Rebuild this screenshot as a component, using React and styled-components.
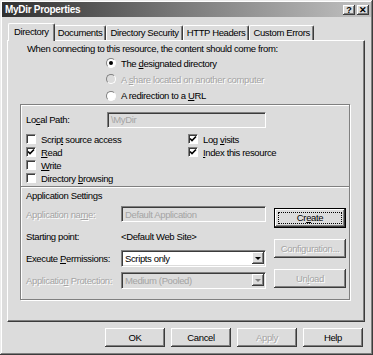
import React from 'react'
import styled, { createGlobalStyle } from 'styled-components'

const FACE = '#dcdcdc'
const SHADOW = '#808080'
const DARK = '#3c3c3c'
const HILITE = '#ffffff'
const GREY_TEXT = '#a4a4a4'
const TRACK = '-0.37px'

const GlobalStyle = createGlobalStyle`
  html, body {
    margin: 0;
    padding: 0;
    background: ${FACE};
  }
  body {
    font-family: "Liberation Sans", Arial, sans-serif;
    font-size: 9.5px;
    letter-spacing: ${TRACK};
    color: #000;
  }
`

const Window = styled.div`
  width: 373px;
  height: 355px;
  box-sizing: border-box;
  background: ${FACE};
  padding: 2px;
  box-shadow: inset -1px -1px ${DARK}, inset 1px 1px #ececec,
    inset -2px -2px ${SHADOW}, inset 2px 2px ${HILITE};
  display: flex;
  flex-direction: column;
`

const TitleBar = styled.div`
  height: 15px;
  background: linear-gradient(90deg, #303030 0%, #7c7c7c 50%, #c2c2c2 100%);
  display: flex;
  align-items: center;
  padding: 0 2px 0 3px;
`

const Title = styled.div`
  flex: 1;
  color: #fff;
  font-weight: bold;
  font-size: 10px;
  letter-spacing: -0.3px;
`

const CaptionButton = styled.div`
  width: 12px;
  height: 10px;
  margin-left: ${p => p.$gap || 0}px;
  background: ${FACE};
  box-shadow: inset -1px -1px ${DARK}, inset 1px 1px ${HILITE}, inset -2px -2px ${SHADOW};
  display: flex;
  align-items: center;
  justify-content: center;
  font-weight: bold;
  font-size: 9px;
  letter-spacing: 0;
  line-height: 10px;
`

const Body = styled.div`
  flex: 1;
  display: flex;
  flex-direction: column;
  padding: 6px 6px 0 5px;
`

const TabStrip = styled.div`
  display: flex;
  align-items: flex-end;
  height: 17px;
  padding-left: 3px;
  position: relative;
  z-index: 1;
`

const Tab = styled.div`
  height: 15px;
  box-sizing: border-box;
  padding: ${p => (p.$active ? '2px 5px 0' : '1px 3px 0')};
  margin: ${p => (p.$active ? '0 -1px -1px -2px' : '0')};
  ${p => p.$active && `height: 18px; z-index: 2;`}
  background: ${FACE};
  border-top: 1px solid ${HILITE};
  border-left: 1px solid ${HILITE};
  border-right: 1px solid ${DARK};
  border-radius: 2px 2px 0 0;
  box-shadow: inset -1px 0 ${SHADOW};
  white-space: nowrap;
  line-height: 12px;
  position: relative;
`

const Panel = styled.div`
  height: 282px;
  box-sizing: border-box;
  border-top: 1px solid ${HILITE};
  border-left: 1px solid ${HILITE};
  border-right: 1px solid ${DARK};
  border-bottom: 1px solid ${DARK};
  box-shadow: inset -1px -1px ${SHADOW};
  padding: 2px 14px 0 12px;
  display: flex;
  flex-direction: column;
`

const Intro = styled.div`
  margin-left: 7px;
  line-height: 12px;
`

const RadioList = styled.div`
  margin: 0 0 0 86px;
  display: flex;
  flex-direction: column;
`

const Choice = styled.label`
  display: flex;
  align-items: center;
  height: 16.3px;
  gap: 5px;
  color: ${p => (p.$disabled ? GREY_TEXT : '#000')};
  text-shadow: ${p => (p.$disabled ? `1px 1px ${HILITE}` : 'none')};
`

const RadioDot = styled.span`
  width: 10px;
  height: 10px;
  box-sizing: border-box;
  border-radius: 50%;
  border: 1px solid;
  border-color: ${SHADOW} ${HILITE} ${HILITE} ${SHADOW};
  background: ${p => (p.$disabled ? FACE : '#fff')};
  display: flex;
  align-items: center;
  justify-content: center;
  &::after {
    content: '';
    width: 4px;
    height: 4px;
    border-radius: 50%;
    background: #000;
    display: ${p => (p.$on ? 'block' : 'none')};
  }
`

const Group = styled.div`
  margin-top: 0;
  height: 196px;
  box-sizing: border-box;
  border: 1px solid ${SHADOW};
  box-shadow: inset 1px 1px ${HILITE}, 1px 1px ${HILITE};
  padding: 7px 5px 0 5px;
  display: flex;
  flex-direction: column;
`

const FieldRow = styled.div`
  display: flex;
  align-items: center;
`

const FieldLabel = styled.div`
  width: ${p => p.$w}px;
  flex-shrink: 0;
  white-space: nowrap;
  color: ${p => (p.$disabled ? GREY_TEXT : '#000')};
  text-shadow: ${p => (p.$disabled ? `1px 1px ${HILITE}` : 'none')};
`

const TextBox = styled.div`
  width: ${p => p.$w}px;
  height: ${p => p.$h || 16}px;
  box-sizing: border-box;
  border: 1px solid;
  border-color: ${SHADOW} ${HILITE} ${HILITE} ${SHADOW};
  box-shadow: inset 1px 1px ${DARK}, inset -1px -1px ${FACE};
  background: ${p => (p.$disabled ? FACE : '#fff')};
  color: ${p => (p.$disabled ? GREY_TEXT : '#000')};
  display: flex;
  align-items: center;
  padding: 0 1px 0 3px;
  white-space: nowrap;
  overflow: hidden;
`

const SelectText = styled.span`
  flex: 1;
`

const DropButton = styled.span`
  width: 12px;
  height: 12px;
  box-sizing: border-box;
  background: ${FACE};
  box-shadow: inset -1px -1px ${DARK}, inset 1px 1px ${HILITE}, inset -2px -2px ${SHADOW};
  display: flex;
  align-items: center;
  justify-content: center;
  &::after {
    content: '';
    border-left: 3px solid transparent;
    border-right: 3px solid transparent;
    border-top: 3px solid ${p => (p.$disabled ? SHADOW : '#000')};
    margin-top: 1px;
  }
`

const CheckGrid = styled.div`
  margin-top: 5px;
  display: grid;
  grid-template-columns: 162px 1fr;
  grid-auto-rows: 13px;
`

const CheckItem = styled.label`
  display: flex;
  align-items: center;
  gap: 5px;
  grid-column: ${p => p.$col};
  grid-row: ${p => p.$row};
`

const Box = styled.span`
  width: 10px;
  height: 10px;
  box-sizing: border-box;
  border: 1px solid;
  border-color: ${SHADOW} ${HILITE} ${HILITE} ${SHADOW};
  box-shadow: inset 1px 1px ${DARK};
  background: #fff;
  display: flex;
  align-items: center;
  justify-content: center;
`

const Separator = styled.div`
  margin: 1px -5px 0;
  border-top: 1px solid ${SHADOW};
  border-bottom: 1px solid ${HILITE};
`

const SectionTitle = styled.div`
  margin-top: 1px;
  line-height: 13px;
`

const AppSettings = styled.div`
  margin-top: 4px;
  display: flex;
`

const AppGrid = styled.div`
  display: grid;
  grid-template-columns: 95px 145px;
  grid-auto-rows: 17px;
  row-gap: 5px;
  align-items: center;
`

const ButtonColumn = styled.div`
  margin: 2px 0 0 8px;
  display: flex;
  flex-direction: column;
  gap: 11px;
`

const Button = styled.div`
  width: ${p => p.$w}px;
  height: ${p => p.$h}px;
  box-sizing: border-box;
  background: ${FACE};
  box-shadow: ${p =>
    p.$default
      ? `inset 0 0 0 1px #000, inset -2px -2px ${DARK}, inset 2px 2px ${HILITE}, inset -3px -3px ${SHADOW}`
      : `inset -1px -1px ${DARK}, inset 1px 1px ${HILITE}, inset -2px -2px ${SHADOW}`};
  display: flex;
  align-items: center;
  justify-content: center;
  color: ${p => (p.$disabled ? GREY_TEXT : '#000')};
  text-shadow: ${p => (p.$disabled ? `1px 1px ${HILITE}` : 'none')};
  position: relative;
`

const FocusRing = styled.span`
  position: absolute;
  inset: 4px;
  border: 1px dotted #000;
`

const Footer = styled.div`
  display: flex;
  justify-content: flex-end;
  gap: 6px;
  padding: 6px 2px 0 0;
`

const U = styled.span`
  text-decoration: underline;
  text-underline-offset: 1px;
`

const Check = () => (
  <svg width="8" height="8" viewBox="0 0 8 8">
    <path d="M1 3.5 L3 5.5 L7 1.5" stroke="#000" strokeWidth="1.6" fill="none" />
  </svg>
)

function App() {
  return (
    <>
      <GlobalStyle />
      <Window>
        <TitleBar>
          <Title>MyDir Properties</Title>
          <CaptionButton>?</CaptionButton>
          <CaptionButton $gap={2}>✕</CaptionButton>
        </TitleBar>
        <Body>
          <TabStrip>
            <Tab $active>Directory</Tab>
            <Tab>Documents</Tab>
            <Tab>Directory Security</Tab>
            <Tab>HTTP Headers</Tab>
            <Tab>Custom Errors</Tab>
          </TabStrip>
          <Panel>
            <Intro>When connecting to this resource, the content should come from:</Intro>
            <RadioList>
              <Choice>
                <RadioDot $on />
                <span>The <U>d</U>esignated directory</span>
              </Choice>
              <Choice $disabled>
                <RadioDot $disabled />
                <span>A <U>s</U>hare located on another computer</span>
              </Choice>
              <Choice>
                <RadioDot />
                <span>A redirection to a <U>U</U>RL</span>
              </Choice>
            </RadioList>
            <Group>
              <FieldRow>
                <FieldLabel $w={81}>Lo<U>c</U>al Path:</FieldLabel>
                <TextBox $w={159} $disabled>\MyDir</TextBox>
              </FieldRow>
              <CheckGrid>
                <CheckItem $col={1} $row={1}><Box /><span>Scrip<U>t</U> source access</span></CheckItem>
                <CheckItem $col={1} $row={2}><Box><Check /></Box><span><U>R</U>ead</span></CheckItem>
                <CheckItem $col={1} $row={3}><Box /><span><U>W</U>rite</span></CheckItem>
                <CheckItem $col={1} $row={4}><Box /><span>Directory <U>b</U>rowsing</span></CheckItem>
                <CheckItem $col={2} $row={1}><Box><Check /></Box><span>Log <U>v</U>isits</span></CheckItem>
                <CheckItem $col={2} $row={2}><Box><Check /></Box><span><U>I</U>ndex this resource</span></CheckItem>
              </CheckGrid>
              <Separator />
              <SectionTitle>Application Settings</SectionTitle>
              <AppSettings>
                <AppGrid>
                  <FieldLabel $disabled>Application na<U>m</U>e:</FieldLabel>
                  <TextBox $w={145} $disabled>Default Application</TextBox>
                  <FieldLabel>Starting point:</FieldLabel>
                  <FieldLabel>&lt;Default Web Site&gt;</FieldLabel>
                  <FieldLabel>Execute <U>P</U>ermissions:</FieldLabel>
                  <TextBox $w={145} $h={17}>
                    <SelectText>Scripts only</SelectText>
                    <DropButton />
                  </TextBox>
                  <FieldLabel $disabled>Applicatio<U>n</U> Protection:</FieldLabel>
                  <TextBox $w={145} $h={17} $disabled>
                    <SelectText>Medium (Pooled)</SelectText>
                    <DropButton $disabled />
                  </TextBox>
                </AppGrid>
                <ButtonColumn>
                  <Button $w={72} $h={20} $default>
                    <FocusRing />
                    <span>Cr<U>e</U>ate</span>
                  </Button>
                  <Button $w={72} $h={19} $disabled>Configuration...</Button>
                  <Button $w={72} $h={19} $disabled>Un<U>l</U>oad</Button>
                </ButtonColumn>
              </AppSettings>
            </Group>
          </Panel>
          <Footer>
            <Button $w={60} $h={19}>OK</Button>
            <Button $w={60} $h={19}>Cancel</Button>
            <Button $w={60} $h={19} $disabled>Apply</Button>
            <Button $w={60} $h={19}>Help</Button>
          </Footer>
        </Body>
      </Window>
    </>
  )
}

export default App
